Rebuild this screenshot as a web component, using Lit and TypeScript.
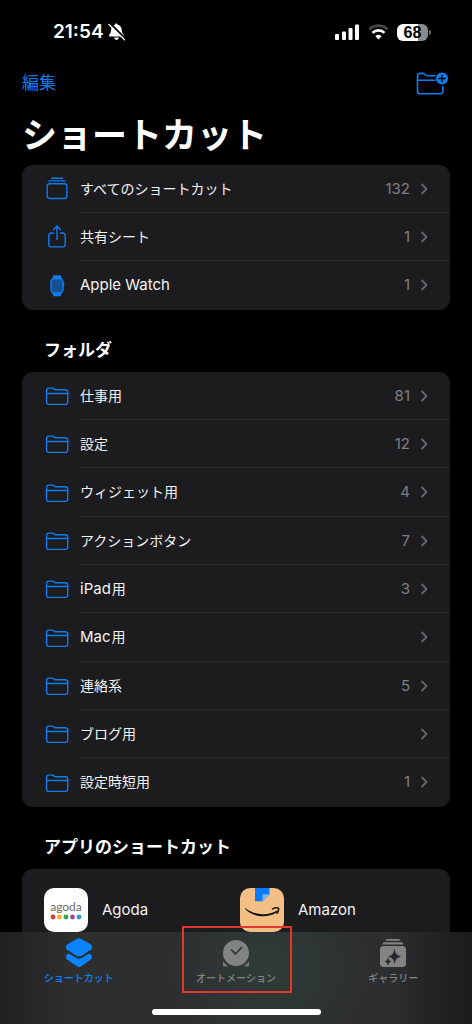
import { LitElement, html, svg, css, nothing } from "lit";
import { customElement, property } from "lit/decorators.js";

type IconName = "stack" | "share" | "watch" | "folder";

interface Entry {
  icon: IconName;
  label: string;
  latin?: string;
  count?: number;
}

const library: Entry[] = [
  { icon: "stack", label: "すべてのショートカット", count: 132 },
  { icon: "share", label: "共有シート", count: 1 },
  { icon: "watch", label: "", latin: "Apple Watch", count: 1 },
];

const folders: Entry[] = [
  { icon: "folder", label: "仕事用", count: 81 },
  { icon: "folder", label: "設定", count: 12 },
  { icon: "folder", label: "ウィジェット用", count: 4 },
  { icon: "folder", label: "アクションボタン", count: 7 },
  { icon: "folder", label: "用", latin: "iPad", count: 3 },
  { icon: "folder", label: "用", latin: "Mac" },
  { icon: "folder", label: "連絡系", count: 5 },
  { icon: "folder", label: "ブログ用" },
  { icon: "folder", label: "設定時短用", count: 1 },
];

const glyphs = {
  stack: svg`
    <path d="M6.500 1.200h11M4 3.900h16" />
    <rect x="2.200" y="6.700" width="19.600" height="14.800" rx="2.400" />`,
  share: svg`
    <path d="M8.500 8H6.200A2.400 2.400 0 0 0 3.800 10.400V19.500A2.400 2.400 0 0 0 6.200 21.900H17.800A2.400 2.400 0 0 0 20.200 19.500V10.400A2.400 2.400 0 0 0 17.800 8H15.500" />
    <path d="M12 14.500V1.300M8.600 4.500L12 1.100L15.400 4.500" />`,
  watch: svg`
    <path d="M8 5L8.800 2H15.200L16 5ZM8 18.500L8.800 21.500H15.200L16 18.500Z" fill="currentColor" />
    <rect x="6" y="4.500" width="12" height="14.500" rx="3.600" fill="#14508f" />
    <path d="M18.600 9V11.500" />`,
  folder: svg`
    <path d="M1.500 18V6.400A2.300 2.300 0 0 1 3.800 4.100H7.200C8.700 4.100 9 5.700 10.700 5.700H20.300A2.400 2.400 0 0 1 22.700 8.100V18A2.400 2.400 0 0 1 20.300 20.400H3.900A2.400 2.400 0 0 1 1.500 18Z" />
    <path d="M1.500 9.500H22.700" />`,
};

@customElement("shortcut-row")
export class ShortcutRow extends LitElement {
  @property({ attribute: false }) entry!: Entry;

  static styles = css`
    :host {
      display: block;
    }
    .row {
      box-sizing: border-box;
      height: 100%;
      display: flex;
      align-items: center;
      padding-left: 23px;
      color: #f2f2f4;
      text-decoration: none;
    }
    .icon {
      flex: none;
      width: 24px;
      height: 24px;
      margin-right: 11px;
      color: #0d7df2;
      fill: none;
      stroke: currentColor;
      stroke-width: 1.4;
      stroke-linecap: round;
      stroke-linejoin: round;
    }
    .body {
      box-sizing: border-box;
      flex: 1;
      align-self: stretch;
      display: flex;
      align-items: center;
      padding-right: 22px;
      border-bottom: 1px solid #29292c;
    }
    :host(:last-child) .body {
      border-bottom-color: transparent;
    }
    .label {
      flex: 1;
      display: flex;
      align-items: center;
      gap: 1px;
      font-size: 14px;
      line-height: 20px;
    }
    .latin {
      font-size: 15px;
    }
    .count {
      font-size: 15px;
      line-height: 20px;
      color: #7f7f84;
    }
    .chevron {
      width: 8px;
      height: 14px;
      margin-left: 10px;
      fill: none;
      stroke: #66666b;
      stroke-width: 1.8;
      stroke-linecap: round;
      stroke-linejoin: round;
    }
  `;

  render() {
    const { icon, label, latin, count } = this.entry;
    return html`
      <a class="row" href="#">
        <svg class="icon" viewBox="0 0 24 24" aria-hidden="true">${glyphs[icon]}</svg>
        <span class="body">
          <span class="label">
            ${latin ? html`<span class="latin">${latin}</span>` : nothing}
            ${label ? html`<span>${label}</span>` : nothing}
          </span>
          ${count === undefined ? nothing : html`<span class="count">${count}</span>`}
          <svg class="chevron" viewBox="0 0 8 14" aria-hidden="true"><path d="M2 2.500L6.500 7L2 11.500" /></svg>
        </span>
      </a>
    `;
  }
}

@customElement("app-root")
export class AppRoot extends LitElement {
  static styles = css`
    :host {
      position: relative;
      display: flex;
      flex-direction: column;
      height: 100vh;
      overflow: hidden;
      background: #000;
      color: #fff;
      font-family: Inter, "Noto Sans CJK JP", sans-serif;
    }
    button {
      margin: 0;
      padding: 0;
      border: 0;
      background: none;
      color: inherit;
      font: inherit;
    }
    .status {
      flex: none;
      display: flex;
      align-items: center;
      justify-content: space-between;
      height: 64px;
      padding: 0 41px 0 53px;
    }
    .clock,
    .signals {
      display: flex;
      align-items: center;
    }
    .clock {
      gap: 4px;
      font-size: 19px;
      font-weight: 600;
      line-height: 24px;
    }
    .bell {
      width: 18px;
      height: 18px;
    }
    .signals {
      gap: 8px;
    }
    .bars {
      width: 25px;
      height: 16px;
      fill: #fff;
    }
    .wifi {
      width: 21px;
      height: 16px;
      fill: none;
    }
    .battery {
      display: flex;
      align-items: center;
      gap: 1px;
    }
    .cell {
      width: 31px;
      border-radius: 6px;
      background: linear-gradient(90deg, #fff 68%, #8b8b8b 68%);
      color: #000;
      font-family: "Liberation Sans", sans-serif;
      font-size: 16px;
      font-weight: 700;
      line-height: 17px;
      text-align: center;
    }
    .nub {
      width: 2px;
      height: 5px;
      border-radius: 0 2px 2px 0;
      background: #6d6d6d;
    }
    .toolbar {
      flex: none;
      display: flex;
      align-items: center;
      justify-content: space-between;
      height: 38px;
      padding: 0 22px;
      color: #0d7df2;
    }
    .edit {
      font-size: 17px;
      line-height: 24px;
    }
    .new-folder {
      display: flex;
    }
    .new-folder svg {
      width: 34px;
      height: 26px;
      fill: none;
      stroke: currentColor;
      stroke-width: 1.6;
      stroke-linecap: round;
      stroke-linejoin: round;
    }
    .content {
      flex: 1;
      min-height: 0;
      overflow: hidden;
      padding: 12px 22px 0;
    }
    h1 {
      margin: 0 0 9px;
      font-size: 35px;
      font-weight: 700;
      line-height: 42px;
    }
    h2 {
      margin: 28px 22px 10px;
      font-size: 17px;
      font-weight: 700;
      line-height: 24px;
    }
    .card {
      border-radius: 11px;
      background: #1c1c1e;
      overflow: hidden;
    }
    .rows {
      display: grid;
      grid-auto-rows: 48px 48px 49px;
    }
    .apps {
      display: grid;
      grid-template-columns: 1fr 1fr;
      padding: 19px 14px 60px 22px;
    }
    .app {
      display: flex;
      align-items: center;
      gap: 14px;
      color: #f2f2f4;
      font-size: 15px;
      line-height: 20px;
      text-decoration: none;
    }
    .tile {
      display: flex;
      flex-direction: column;
      align-items: center;
      justify-content: center;
      width: 44px;
      height: 44px;
      border-radius: 10px;
      overflow: hidden;
    }
    .agoda {
      gap: 1px;
      background: #fff;
      color: #6a6a6c;
      font-family: Lato, sans-serif;
      font-size: 12px;
      line-height: 13px;
    }
    .dots {
      width: 32px;
      height: 6px;
    }
    .amazon {
      background: #f3bf84;
    }
    .tabs {
      position: absolute;
      left: 0;
      right: 0;
      bottom: 0;
      height: 92px;
      display: flex;
      flex-direction: column;
      justify-content: space-between;
      align-items: center;
      background:
        radial-gradient(100px 90px at 57% 40%, rgba(47, 62, 57, 0.9), transparent),
        linear-gradient(90deg, #1f2022 0%, #2d2e30 15%, #2d2e30 82%, #1b1b1c 100%);
    }
    .tab-list {
      align-self: stretch;
      display: grid;
      grid-template-columns: repeat(3, 1fr);
    }
    .tab {
      position: relative;
      display: flex;
      flex-direction: column;
      align-items: center;
      gap: 2px;
      padding: 5px 0 0;
      color: #818483;
      font-size: 10px;
      font-weight: 500;
      line-height: 14px;
    }
    .tab svg {
      width: 32px;
      height: 32px;
    }
    .active {
      color: #0d84ff;
    }
    .marker {
      position: absolute;
      top: -6px;
      left: 50%;
      box-sizing: border-box;
      width: 110px;
      height: 67px;
      margin-left: -54px;
      border: 2px solid #e0372f;
    }
    .home {
      width: 169px;
      height: 6px;
      margin-bottom: 9px;
      border-radius: 3px;
      background: #fff;
    }
  `;

  private renderRows(entries: Entry[]) {
    return html`
      <div class="card rows">
        ${entries.map((entry) => html`<shortcut-row .entry=${entry}></shortcut-row>`)}
      </div>
    `;
  }

  render() {
    return html`
      <header class="status">
        <div class="clock">
          <span>21:54</span>
          <svg class="bell" viewBox="0 0 18 18" aria-hidden="true">
            <path d="M8.300 0.500C9 0.500 9.600 1 9.700 1.700C12.300 2.300 13.600 4.300 13.700 6.600C13.800 9.500 14.600 10.600 15.600 11.600C16.300 12.400 15.900 13.600 14.900 13.600H2C1 13.600 0.600 12.400 1.300 11.600C2.300 10.600 3 9.500 3.100 6.600C3.200 4.300 4.500 2.300 7 1.700C7.100 1 7.600 0.500 8.300 0.500Z" fill="#fff" />
            <path d="M6.200 14.600H10.800A2.300 2.300 0 0 1 6.200 14.600Z" fill="#fff" />
            <path d="M1.800 0.200L17.300 15.500" stroke="#000" stroke-width="2" />
            <path d="M0.800 1.300L16.500 16.800" stroke="#fff" stroke-width="1.200" stroke-linecap="round" />
          </svg>
        </div>
        <div class="signals">
          <svg class="bars" viewBox="0 0 25 16" aria-hidden="true">
            <rect x="0" y="10" width="4" height="6" rx="1" />
            <rect x="7" y="7.500" width="4" height="8.500" rx="1" />
            <rect x="13.500" y="4" width="4" height="12" rx="1" />
            <rect x="20" y="0.500" width="4" height="15.500" rx="1" />
          </svg>
          <svg class="wifi" viewBox="0 0 21 16" aria-hidden="true">
            <path d="M1.300 5.400A13 13 0 0 1 19.700 5.400" stroke="#454545" stroke-width="2.600" />
            <path d="M4.500 8.900A8.500 8.500 0 0 1 16.500 8.900" stroke="#fff" stroke-width="2.700" />
            <path d="M10.500 15.500L7.400 12.300A4.500 4.500 0 0 1 13.600 12.300Z" fill="#fff" />
          </svg>
          <div class="battery"><span class="cell">68</span><span class="nub"></span></div>
        </div>
      </header>

      <div class="toolbar">
        <button class="edit" type="button">編集</button>
        <button class="new-folder" type="button" aria-label="新規フォルダ">
          <svg viewBox="1.500 0 34 26" aria-hidden="true">
            <path d="M20.500 5.700H12.500C10.600 5.700 10.200 3.400 8.400 3.400H5.500A2.500 2.500 0 0 0 3 5.900V21.200A2.500 2.500 0 0 0 5.500 23.700H25.800A2.500 2.500 0 0 0 28.300 21.200V16.500" />
            <path d="M3 10.300H20.500" />
            <circle cx="27.500" cy="8.500" r="6" fill="currentColor" stroke="none" />
            <path d="M27.500 5.300V11.700M24.300 8.500H30.700" stroke="#000" stroke-width="1.400" />
          </svg>
        </button>
      </div>

      <main class="content">
        <h1>ショートカット</h1>
        ${this.renderRows(library)}
        <h2>フォルダ</h2>
        ${this.renderRows(folders)}
        <h2>アプリのショートカット</h2>
        <div class="card apps">
          <a class="app" href="#">
            <span class="tile agoda">
              <span>agoda</span>
              <svg class="dots" viewBox="0 0 32 6" aria-hidden="true">
                <circle cx="3" cy="3" r="2.400" fill="#e5393f" />
                <circle cx="9.500" cy="3" r="2.400" fill="#f7b21b" />
                <circle cx="16" cy="3" r="2.400" fill="#2fa84f" />
                <circle cx="22.500" cy="3" r="2.400" fill="#9a4aa0" />
                <circle cx="29" cy="3" r="2.400" fill="#2a9fd6" />
              </svg>
            </span>
            <span>Agoda</span>
          </a>
          <a class="app" href="#">
            <span class="tile amazon">
              <svg viewBox="0 0 44 44" aria-hidden="true">
                <path d="M15 0H29.500V6.500L22.500 13.300H15Z" fill="#0a7bff" />
                <path d="M29.500 6.200L22.500 13.300V6.200Z" fill="#7cb4f2" />
                <path d="M5.500 20.300C15 27.500 28 27.700 36.500 22.800C37.300 22.300 38 23.200 37.200 23.900C28 30.600 13 29.500 5.200 20.900C4.900 20.400 5.200 20 5.500 20.300Z" fill="#1c1712" />
                <path d="M32.500 20.900C34.500 19.600 37.800 19.500 38.500 20.200C39.200 21 38.200 23.800 36.900 25.200" fill="none" stroke="#1c1712" stroke-width="1.600" stroke-linecap="round" />
              </svg>
            </span>
            <span>Amazon</span>
          </a>
        </div>
      </main>

      <nav class="tabs">
        <div class="tab-list">
          <button class="tab active" type="button">
            <svg viewBox="0 0 32 32" aria-hidden="true" fill="currentColor">
              <path d="M14 1.800Q16 0.700 18 1.800L27.500 7.200Q30.300 9.400 28.300 12.200L19 18.400Q16 20.200 13 18.400L3.700 12.200Q1.700 9.400 4.500 7.200Z" />
              <path d="M4.400 17.200Q6 16.400 7.600 17.400L13 20.800Q16 22.500 19 20.800L24.400 17.400Q26 16.400 27.600 17.200Q30.200 19.700 28.200 22.300L18.500 29Q16 30.800 13.500 29L3.800 22.300Q1.800 19.700 4.400 17.200Z" />
            </svg>
            <span>ショートカット</span>
          </button>
          <button class="tab" type="button">
            <svg viewBox="0 0 32 32" aria-hidden="true" fill="currentColor">
              <circle cx="16" cy="16" r="13" />
              <path d="M11.500 13L15.500 17L21.500 10.500" fill="none" stroke="#303a37" stroke-width="1.800" stroke-linecap="round" stroke-linejoin="round" />
              <path d="M3 24.300C4.300 26.500 6.300 28.300 8.700 29.300H4A1 1 0 0 1 3 28.300ZM29 24.300C27.700 26.500 25.700 28.300 23.300 29.300H28A1 1 0 0 0 29 28.300Z" />
            </svg>
            <span>オートメーション</span>
            <span class="marker"></span>
          </button>
          <button class="tab" type="button">
            <svg viewBox="0 0 32 32" aria-hidden="true" fill="currentColor">
              <path d="M8.500 3.800Q8.700 2 10.500 2H21.500Q23.300 2 23.500 3.800Z" />
              <path d="M5.500 7.500Q5.700 5.300 7.800 5.300H24.200Q26.300 5.300 26.500 7.500Z" />
              <rect x="3" y="9" width="26" height="21" rx="3.500" />
              <path d="M17.500 12.500Q18 18.500 23.500 19.500Q18 20.500 17.500 26.500Q17 20.500 11.500 19.500Q17 18.500 17.500 12.500ZM11 21Q11.200 24 14 24.500Q11.200 25 11 28Q10.800 25 8 24.500Q10.800 24 11 21Z" fill="#26272a" stroke="#26272a" stroke-width="0.600" />
            </svg>
            <span>ギャラリー</span>
          </button>
        </div>
        <div class="home"></div>
      </nav>
    `;
  }
}
